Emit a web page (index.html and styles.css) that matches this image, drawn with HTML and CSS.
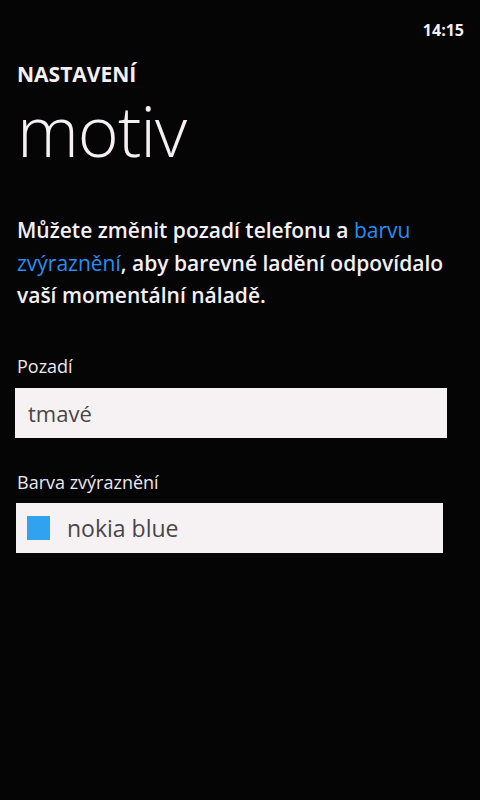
FILE: index.html
```html
<!DOCTYPE html>
<html lang="cs">
<head>
  <meta charset="UTF-8" />
  <meta name="viewport" content="width=device-width, initial-scale=1.0"/>
  <title>Nastavení – motiv</title>
  <link rel="stylesheet" href="styles.css">
</head>
<body>
  <div class="status">
    <span class="clock">14:15</span>
  </div>

  <header class="title">
    <div class="app-name">NASTAVENÍ</div>
    <h1>motiv</h1>
  </header>

  <p class="intro">
    Můžete změnit pozadí telefonu a <a href="#">barvu zvýraznění</a>, aby barevné ladění odpovídalo vaší momentální náladě.
  </p>

  <div class="fields">
    <div class="field">
      <label>Pozadí</label>
      <div class="picker">tmavé</div>
    </div>

    <div class="field">
      <label>Barva zvýraznění</label>
      <div class="picker accent">
        <span class="swatch"></span>
        nokia blue
      </div>
    </div>
  </div>
</body>
</html>
```

FILE: styles.css
```css
body {
  margin: 0;
  width: 480px;
  height: 800px;
  background-color: #050505;
  color: #f4f0f4;
  font-family: "Open Sans", "Noto Sans", sans-serif;
  overflow: hidden;
}
.status {
  display: flex;
  justify-content: flex-end;
  padding: 19px 16px 0 0;
  height: 24px;
}
.clock {
  font-size: 16px;
  font-weight: 700;
}
.title {
  padding: 17px 0 0 17px;
}
.app-name {
  font-size: 21px;
  font-weight: 700;
  line-height: 28px;
}
h1 {
  margin: 2px 0 0 0;
  font-size: 70px;
  font-weight: 300;
  line-height: 80px;
  letter-spacing: -1px;
}
.intro {
  margin: 44px 0 0 17px;
  width: 450px;
  font-size: 21px;
  font-weight: 600;
  line-height: 32.5px;
}
.intro a {
  color: #2a8df2;
  text-decoration: none;
  font-weight: 400;
}
.fields {
  margin: 42px 0 0 15px;
  width: 432px;
  display: flex;
  flex-direction: column;
  gap: 32px;
}
label {
  display: block;
  font-size: 18px;
  line-height: 24px;
  margin-left: 2px;
  color: #eee8ee;
}
.picker {
  box-sizing: border-box;
  margin-top: 10px;
  height: 50px;
  background-color: #f6f2f4;
  color: #4a4648;
  font-size: 22px;
  display: flex;
  align-items: center;
  padding-left: 13px;
}
.accent {
  width: 427px;
  margin-top: 9px;
  margin-left: 1px;
  gap: 17px;
  padding-left: 11px;
  font-size: 23px;
}
.swatch {
  width: 23px;
  height: 24px;
  background-color: #2fa2f0;
}
```
